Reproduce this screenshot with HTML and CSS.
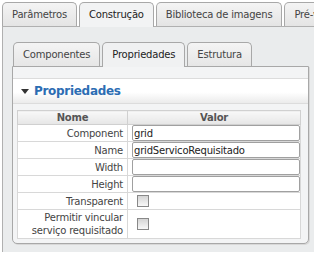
FILE: index.html
```html
<!DOCTYPE html>
<html lang="pt">
<head>
    <meta charset="UTF-8">
    <title>Propriedades</title>
    <link rel="stylesheet" href="styles.css">
</head>
<body>
    <div class="tabs outer-tabs">
        <div class="tab">Parâmetros</div>
        <div class="tab active">Construção</div>
        <div class="tab">Biblioteca de imagens</div>
        <div class="tab">Pré-visualização</div>
    </div>
    <div class="outer-panel">
        <div class="tabs inner-tabs">
            <div class="tab">Componentes</div>
            <div class="tab active">Propriedades</div>
            <div class="tab">Estrutura</div>
        </div>
        <div class="inner-panel">
            <div class="section-header">
                <span class="arrow"></span>
                <span class="section-title">Propriedades</span>
            </div>
            <table class="props">
                <tr>
                    <th class="col-name">Nome</th>
                    <th>Valor</th>
                </tr>
                <tr>
                    <td class="label">Component</td>
                    <td><input type="text" value="grid"></td>
                </tr>
                <tr>
                    <td class="label">Name</td>
                    <td><input type="text" value="gridServicoRequisitado"></td>
                </tr>
                <tr>
                    <td class="label">Width</td>
                    <td><input type="text" value=""></td>
                </tr>
                <tr>
                    <td class="label">Height</td>
                    <td><input type="text" value=""></td>
                </tr>
                <tr>
                    <td class="label">Transparent</td>
                    <td><span class="check"></span></td>
                </tr>
                <tr>
                    <td class="label">Permitir vincular<br>serviço requisitado</td>
                    <td><span class="check"></span></td>
                </tr>
            </table>
        </div>
    </div>
</body>
</html>
```

FILE: styles.css
```css
body {
    margin: 0;
    background: #ffffff;
    font-family: "DejaVu Sans", Verdana, sans-serif;
    font-size: 10px;
    letter-spacing: -0.2px;
    color: #333;
    width: 314px;
    height: 253px;
    overflow: hidden;
}
.tabs {
    display: flex;
    gap: 2px;
    white-space: nowrap;
}
.tab {
    height: 23px;
    line-height: 23px;
    padding: 0 9px;
    border: 1px solid #a8a8a8;
    border-bottom: none;
    border-radius: 5px 5px 0 0;
    background: linear-gradient(#f4f4f4, #e4e4e4);
    color: #444;
    flex-shrink: 0;
}
.tab.active {
    background: #f2f3f4;
    color: #222;
    height: 24px;
    margin-bottom: -1px;
}
.outer-tabs {
    padding: 2px 0 0 2px;
    align-items: flex-end;
}
.outer-panel {
    margin-left: 2px;
    border-left: 1px solid #b0b0b0;
    border-top: 1px solid #b0b0b0;
    background: #eaeced;
    padding: 15px 5px 8px 9px;
    height: 226px;
    box-sizing: border-box;
}
.inner-tabs {
    padding-left: 1px;
    align-items: flex-end;
}
.inner-tabs .tab {
    background: linear-gradient(#f4f4f4, #e6e6e6);
}
.inner-tabs .tab.active {
    background: #f0f1f2;
}
.inner-panel {
    border: 1px solid #a8a8a8;
    border-radius: 0 0 5px 5px;
    background: #f3f4f5;
    padding: 11px 4px 5px 4px;
    height: 178px;
    box-sizing: border-box;
    box-shadow: 1px 1px 0 #d8d8d8;
}
.section-header {
    height: 24px;
    display: flex;
    align-items: center;
    gap: 5px;
    margin: 0 -4px;
    padding-left: 8px;
    background: linear-gradient(#ffffff 55%, #ebebeb);
    border-top: 1px solid #dcdcdc;
    border-bottom: 1px solid #dcdcdc;
}
.arrow {
    width: 0;
    height: 0;
    border-left: 4px solid transparent;
    border-right: 4px solid transparent;
    border-top: 5px solid #333;
}
.section-title {
    font-size: 12px;
    font-weight: bold;
    letter-spacing: -0.3px;
    color: #2c6db3;
}
.props {
    margin-top: 6px;
    width: 284px;
    border-collapse: collapse;
    background: #ffffff;
    border: 1px solid #d0d0d0;
}
.props th {
    height: 13px;
    font-size: 10px;
    font-weight: bold;
    color: #555;
    background: linear-gradient(#f8f8f8, #e6e6e6);
    border: 1px solid #d0d0d0;
    padding: 0;
}
.props .col-name {
    width: 109px;
}
.props td {
    border: 1px solid #d8d8d8;
    height: 16px;
    padding: 0 0 0 4px;
}
.props td.label {
    text-align: right;
    padding: 0 4px 0 0;
    line-height: 13px;
    color: #444;
}
.props tr:last-child td {
    height: 28px;
}
.props input {
    display: block;
    width: 168px;
    height: 16px;
    box-sizing: border-box;
    border: 1px solid #a0a0a0;
    border-radius: 2px;
    padding: 0 1px;
    font-family: "DejaVu Sans", Verdana, sans-serif;
    font-size: 10px;
    letter-spacing: -0.2px;
    color: #222;
    margin: 0;
}
.check {
    display: block;
    width: 10px;
    height: 10px;
    margin-left: 5px;
    border: 1px solid #888;
    background: linear-gradient(#d4d4d4, #f8f8f8);
}
```
